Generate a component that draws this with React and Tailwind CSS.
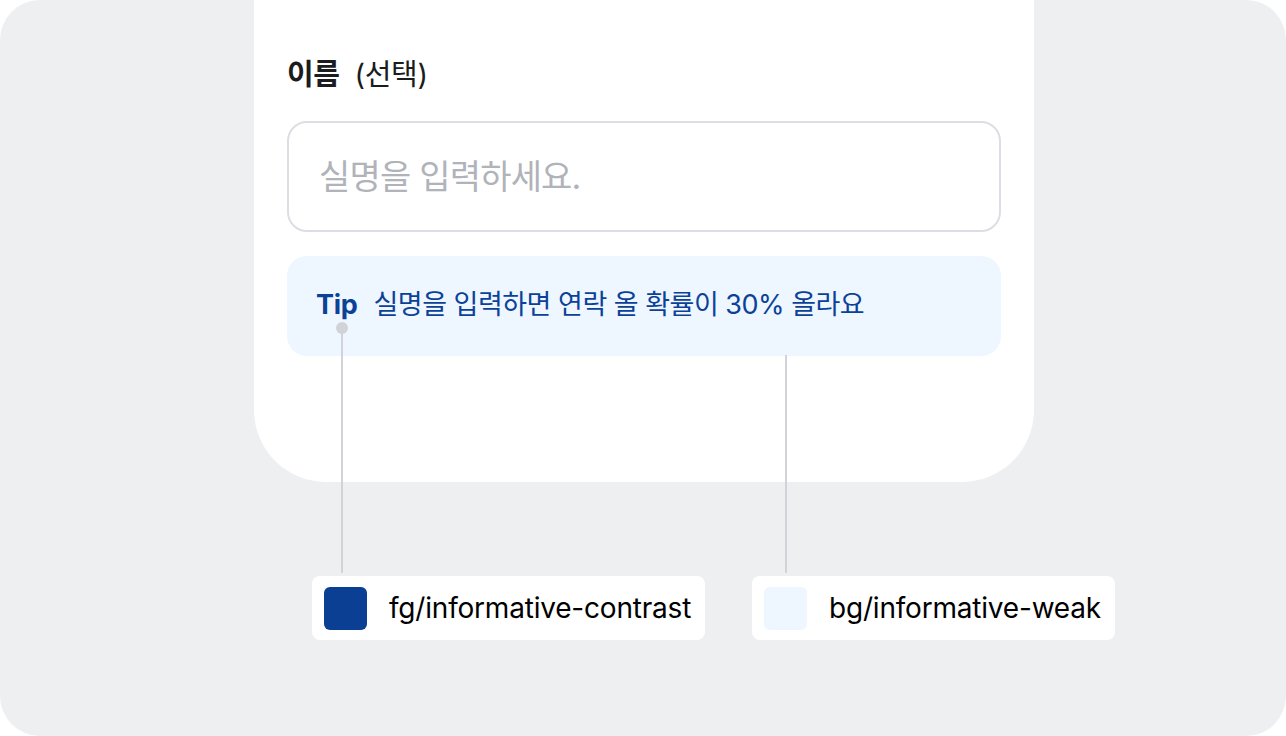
import React from 'react';

const font = { fontFamily: 'Inter, "Noto Sans CJK KR", sans-serif' };

function Legend({ swatch, label, className }) {
    return (
        <div className={`flex items-center h-[64px] bg-white rounded-[8px] pl-[12px] gap-[22px] whitespace-nowrap ${className}`}>
            <div className={`shrink-0 w-[43px] h-[43px] rounded-[6px] ${swatch}`} />
            <span className="text-[28px] text-black tracking-[-0.2px]">{label}</span>
        </div>
    );
}

export default function App() {
    return (
        <div className="w-full h-[736px] bg-white" style={font}>
            <div className="relative w-full h-full bg-[#eeeff1] rounded-[40px] overflow-hidden">
                {/* card */}
                <div className="ml-[254px] w-[780px] h-[482px] bg-white rounded-b-[72px] px-[33px] pt-[56px]">
                    <div className="flex items-baseline gap-[15px] text-[#1a1c20] leading-[38px]">
                        <span className="text-[29px] font-bold tracking-[-0.5px]">이름</span>
                        <span className="text-[29px] tracking-[-0.3px]">(선택)</span>
                    </div>
                    <div className="mt-[27px] h-[111px] rounded-[20px] border-2 border-[#dcdee3] flex items-center px-[30px]">
                        <span className="text-[34px] text-[#b0b3ba] tracking-[-0.8px]">실명을 입력하세요.</span>
                    </div>
                    <div className="mt-[24px] h-[100px] rounded-[20px] bg-[#eef6ff] flex items-center px-[29px] pb-[2px] gap-[16px]">
                        <span className="text-[27px] font-bold text-[#0b4298] tracking-[-0.3px]">Tip</span>
                        <span className="text-[27px] text-[#0b4298] tracking-[-0.5px]">실명을 입력하면 연락 올 확률이 30% 올라요</span>
                    </div>
                </div>

                {/* annotation lines */}
                <div className="absolute left-[336px] top-[322px] w-[12px] h-[12px] rounded-full bg-[#d1d3d8]" />
                <div className="absolute left-[341px] top-[328px] w-[2px] h-[245px] bg-[#d1d3d8]" />
                <div className="absolute left-[785px] top-[355px] w-[2px] h-[218px] bg-[#d1d3d8]" />

                {/* legend */}
                <div className="flex mt-[94px]">
                    <Legend className="ml-[312px] w-[393px]" swatch="bg-[#0a3f94]" label="fg/informative-contrast" />
                    <Legend className="ml-[47px] w-[363px]" swatch="bg-[#eef6ff]" label="bg/informative-weak" />
                </div>
            </div>
        </div>
    );
}
